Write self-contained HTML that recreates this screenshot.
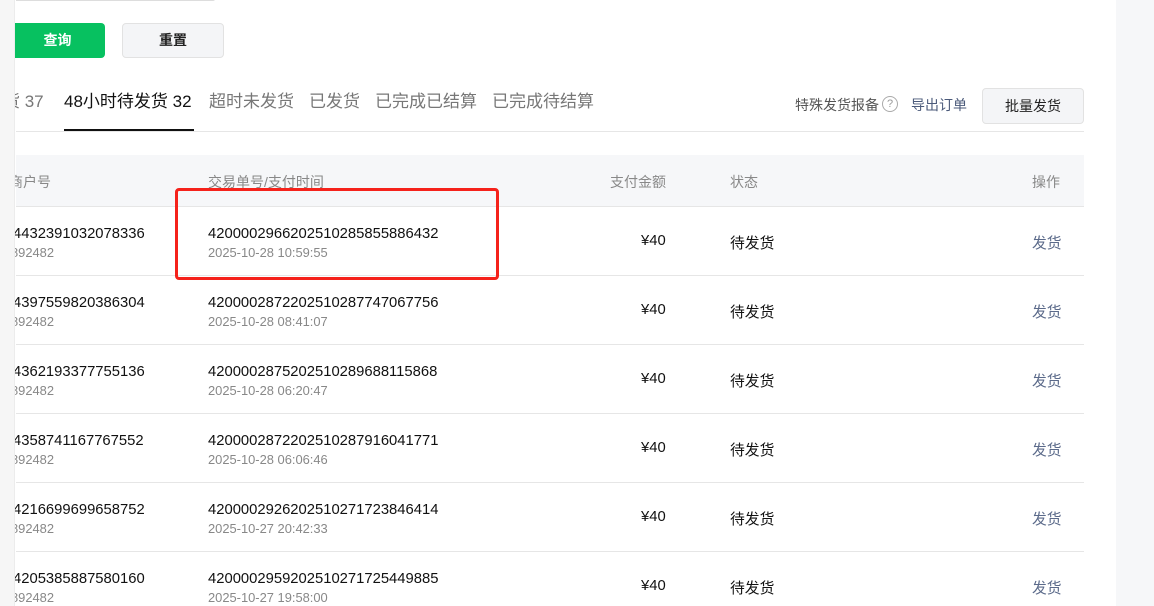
<!DOCTYPE html>
<html><head><meta charset="utf-8"><style>
*{margin:0;padding:0;box-sizing:border-box}
html,body{width:1154px;height:606px;overflow:hidden}
body{background:#fff;font-family:"Liberation Sans","Noto Sans CJK SC",sans-serif;position:relative;color:#000}
.abs{position:absolute;white-space:nowrap}
.left{left:0;top:0;width:15px;height:606px;background:#f6f6f6;border-right:1px solid #ececec;z-index:5}
.right{left:1116px;top:0;width:38px;height:606px;background:#f6f7f9}
.btn{position:absolute;border-radius:4px;font-size:14px;text-align:center;line-height:35px;font-weight:bold}
.tab{position:absolute;top:87px;font-size:17px;color:#777}
.th{position:absolute;top:172px;font-size:14px;color:#888}
.row{position:absolute;left:16px;width:1068px;height:69px;border-bottom:1px solid #e6e6e6}
.m{position:absolute;top:19px;font-size:14.8px;color:#111}
.c{position:absolute;top:25px;font-size:14.8px;color:#111}
.y{position:absolute;top:26px;font-size:14.8px;color:#111}
.s{position:absolute;top:38px;font-size:12.9px;color:#888}
</style></head><body>
<div class="abs left"></div>
<div class="abs right"></div>
<div class="abs" style="left:16px;top:-1px;width:199px;height:2px;border-bottom:1px solid #ddd;border-right:1px solid #ddd;border-radius:0 0 4px 0"></div>
<div class="btn" style="left:10px;top:23px;width:95px;height:35px;background:#07c160;color:#fff">查询</div>
<div class="btn" style="left:122px;top:23px;width:102px;height:35px;background:#f4f5f7;border:1px solid #e2e2e2;color:#222;line-height:33px">重置</div>
<div class="tab" style="left:3px">货 37</div>
<div class="tab" style="left:64px;color:#111">48小时待发货 32</div>
<div class="abs" style="left:64px;top:129px;width:130px;height:3px;background:#111"></div>
<div class="tab" style="left:209px">超时未发货</div>
<div class="tab" style="left:309px">已发货</div>
<div class="tab" style="left:375px">已完成已结算</div>
<div class="tab" style="left:492px">已完成待结算</div>
<div class="abs" style="left:795px;top:95px;font-size:14px;color:#555">特殊发货报备</div>
<div class="abs" style="left:882px;top:96px;width:16px;height:16px;border:1px solid #aaa;border-radius:50%;font-size:11px;color:#999;text-align:center;line-height:14px">?</div>
<div class="abs" style="left:911px;top:95px;font-size:14px;color:#4b5a7a">导出订单</div>
<div class="btn" style="left:982px;top:88px;width:102px;height:36px;background:#f4f5f7;border:1px solid #e2e2e2;color:#222;font-weight:normal;line-height:34px">批量发货</div>
<div class="abs" style="left:16px;top:131px;width:1068px;height:1px;background:#e6e6e6"></div>
<div class="abs" style="left:16px;top:155px;width:1068px;height:52px;background:#f6f7f9;border-bottom:1px solid #e6e6e6"></div>
<div class="th" style="left:9px">商户号</div>
<div class="th" style="left:208px">交易单号/支付时间</div>
<div class="th" style="left:610px">支付金额</div>
<div class="th" style="left:730px">状态</div>
<div class="th" style="left:1032px">操作</div>

<div class="row" style="top:207px"><div class="m" style="left:-3px">4432391032078336</div><div class="s" style="left:-5px">892482</div><div class="m" style="left:192px">4200002966202510285855886432</div><div class="s" style="left:192px">2025-10-28 10:59:55</div><div class="y" style="left:625px">¥40</div><div class="c" style="left:714px">待发货</div><div class="c" style="left:1016px;color:#5b6a8a">发货</div></div>
<div class="row" style="top:276px"><div class="m" style="left:-3px">4397559820386304</div><div class="s" style="left:-5px">892482</div><div class="m" style="left:192px">4200002872202510287747067756</div><div class="s" style="left:192px">2025-10-28 08:41:07</div><div class="y" style="left:625px">¥40</div><div class="c" style="left:714px">待发货</div><div class="c" style="left:1016px;color:#5b6a8a">发货</div></div>
<div class="row" style="top:345px"><div class="m" style="left:-3px">4362193377755136</div><div class="s" style="left:-5px">892482</div><div class="m" style="left:192px">4200002875202510289688115868</div><div class="s" style="left:192px">2025-10-28 06:20:47</div><div class="y" style="left:625px">¥40</div><div class="c" style="left:714px">待发货</div><div class="c" style="left:1016px;color:#5b6a8a">发货</div></div>
<div class="row" style="top:414px"><div class="m" style="left:-3px">4358741167767552</div><div class="s" style="left:-5px">892482</div><div class="m" style="left:192px">4200002872202510287916041771</div><div class="s" style="left:192px">2025-10-28 06:06:46</div><div class="y" style="left:625px">¥40</div><div class="c" style="left:714px">待发货</div><div class="c" style="left:1016px;color:#5b6a8a">发货</div></div>
<div class="row" style="top:483px"><div class="m" style="left:-3px">4216699699658752</div><div class="s" style="left:-5px">892482</div><div class="m" style="left:192px">4200002926202510271723846414</div><div class="s" style="left:192px">2025-10-27 20:42:33</div><div class="y" style="left:625px">¥40</div><div class="c" style="left:714px">待发货</div><div class="c" style="left:1016px;color:#5b6a8a">发货</div></div>
<div class="row" style="top:552px"><div class="m" style="left:-3px">4205385887580160</div><div class="s" style="left:-5px">892482</div><div class="m" style="left:192px">4200002959202510271725449885</div><div class="s" style="left:192px">2025-10-27 19:58:00</div><div class="y" style="left:625px">¥40</div><div class="c" style="left:714px">待发货</div><div class="c" style="left:1016px;color:#5b6a8a">发货</div></div>

<div class="abs" style="left:175px;top:188px;width:324px;height:92px;border:3px solid #f5221b;border-radius:4px"></div>
</body></html>
